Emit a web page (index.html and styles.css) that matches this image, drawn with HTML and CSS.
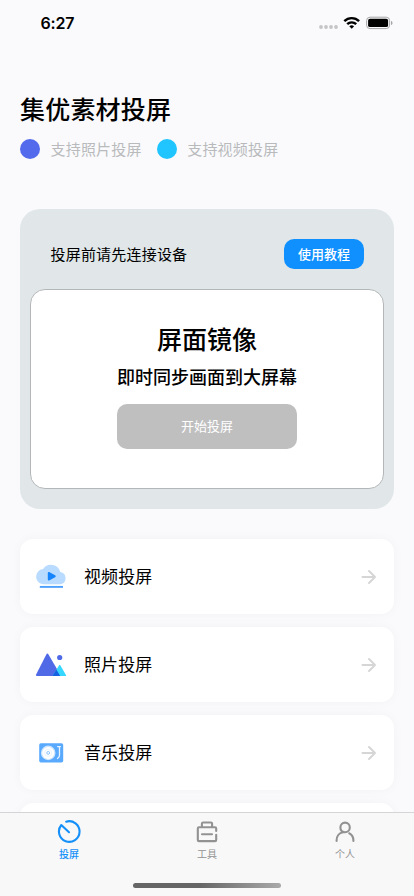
FILE: index.html
```html
<!DOCTYPE html>
<html lang="zh-CN">
<head>
<meta charset="utf-8">
<meta name="viewport" content="width=device-width, initial-scale=1">
<title>集优素材投屏</title>
<link rel="stylesheet" href="styles.css">
</head>
<body>
<div class="screen">
  <header class="status">
    <span class="time">6:27</span>
    <svg class="status-icons" width="76" height="16" viewBox="0 0 76 16">
      <g fill="#c5c5c8"><circle cx="3" cy="11" r="1.9"/><circle cx="8" cy="11" r="1.9"/><circle cx="13" cy="11" r="1.9"/><circle cx="18" cy="11" r="1.9"/></g>
      <g fill="none" stroke="#000" stroke-width="2.4"><path d="M26.300 5.200a10.500 10.500 0 0 1 14.800 0"/><path d="M29.200 8.200a6.400 6.400 0 0 1 9 0"/></g>
      <path d="M31.300 10.200a3.600 3.600 0 0 1 4.800 0l-2.400 2.500z"/>
      <rect x="48.600" y="1.200" width="23" height="11.400" rx="3.400" fill="none" stroke="#a5a5a7"/>
      <rect x="50.100" y="2.700" width="20" height="8.400" rx="1.900"/>
      <path d="M73 5v4c1-.4 1.500-1.200 1.500-2s-.5-1.600-1.500-2z" fill="#a5a5a7"/>
    </svg>
  </header>
  <main class="content">
    <h1 class="title">集优素材投屏</h1>
    <div class="legend">
      <span class="dot photo"></span><span class="legend-text">支持照片投屏</span>
      <span class="dot video"></span><span class="legend-text">支持视频投屏</span>
    </div>
    <section class="panel">
      <div class="panel-head"><span class="panel-note">投屏前请先连接设备</span><button class="guide">使用教程</button></div>
      <div class="mirror">
        <h2 class="mirror-title">屏面镜像</h2>
        <p class="mirror-text">即时同步画面到大屏幕</p>
        <button class="start">开始投屏</button>
      </div>
    </section>
    <div class="list">
      <div class="row">
        <svg class="row-icon" width="32" height="32" viewBox="0 0 32 32">
          <path d="M9.300 23.200a7.600 7.600 0 0 1-1.200-15.200A9.600 9.600 0 0 1 25.300 11a6.200 6.200 0 0 1 .3 12.200z" fill="#b9dbff"/>
          <path d="M12.800 12.200c0-1.100.9-1.500 1.800-1l5.500 3.100c.9.600.9 1.400 0 1.900l-5.500 3.100c-.9.500-1.800.1-1.800-1z" fill="#1684fc"/>
          <path d="M4.800 25.900h23.200" stroke="#4da0fc" stroke-width="1.900"/>
        </svg>
        <span class="row-name">视频投屏</span>
        <svg width="16" height="16" viewBox="0 0 16 16" class="arrow"><path d="M1.500 8h12.500M8 2l6 6-6 6"/></svg>
      </div>
      <div class="row">
        <svg class="row-icon" width="32" height="32" viewBox="0 0 32 32">
          <path d="M11.300 5.400q1.100-1.800 2.200 0l11.700 20.200q.7 1.500-.9 1.500H2q-1.600 0-.9-1.500z" fill="#5069e6"/>
          <path d="M24.100 16.200q.6-1 1.200 0l5.800 10q.4.900-.6.900h-12q-1 0-.5-.9z" fill="#35d7ff"/>
          <path d="M21.350 20.600l3.850 6.500h-6.700q-1 0-.5-.9z" fill="#1462e2"/>
          <circle cx="24.700" cy="8.500" r="2.600" fill="#5069e6"/>
        </svg>
        <span class="row-name">照片投屏</span>
        <svg width="16" height="16" viewBox="0 0 16 16" class="arrow"><path d="M1.500 8h12.500M8 2l6 6-6 6"/></svg>
      </div>
      <div class="row">
        <svg class="row-icon" width="32" height="32" viewBox="0 0 32 32">
          <rect x="4.200" y="6.200" width="24" height="19.200" rx="1.700" fill="#59a9ff"/>
          <circle cx="13.200" cy="15.900" r="7.300" fill="#cce4ff"/>
          <circle cx="13.200" cy="15.900" r="6" fill="#fff"/>
          <circle cx="13.200" cy="15.900" r="3.500" fill="none" stroke="#dfedff" stroke-width=".7"/>
          <circle cx="13.200" cy="15.900" r="1.400" fill="#fff" stroke="#70b4fb" stroke-width=".8"/>
          <path d="M22.600 9.600h2.800M24.500 9.600v9q0 1.500-2 2.900" fill="none" stroke="#e7f3ff" stroke-width="1.300" stroke-linecap="round"/>
        </svg>
        <span class="row-name">音乐投屏</span>
        <svg width="16" height="16" viewBox="0 0 16 16" class="arrow"><path d="M1.500 8h12.500M8 2l6 6-6 6"/></svg>
      </div>
      <div class="row"></div>
    </div>
  </main>
  <nav class="tabs">
    <a class="tab active">
      <svg width="24" height="24" viewBox="0 0 24 24"><path d="M9.200 1.700A10.300 10.300 0 1 1 4.300 5L12 12.200"/></svg>
      <span>投屏</span>
    </a>
    <a class="tab">
      <svg width="24" height="24" viewBox="0 0 24 24"><path d="M21.200 11V8.500q0-1.200-1.200-1.200H4q-1.200 0-1.200 1.200v11.400q0 1.200 1.200 1.200h16q1.200 0 1.200-1.200v-5.200M6.900 7.200V3.700q0-1.200 1.200-1.200h7.800q1.200 0 1.200 1.200v3.500M7 14.200h10"/></svg>
      <span>工具</span>
    </a>
    <a class="tab">
      <svg width="24" height="24" viewBox="0 0 24 24"><path d="M3.600 21v-.5c0-4.500 2.700-7.800 6.500-8.300h2c2.600 0 4.700-2.100 4.700-4.800s-2.100-4.800-4.700-4.800-4.700 2.100-4.700 4.800c0 2.300 1.500 4.200 3.600 4.700M16.200 13.300c2.600 1.300 4.200 4 4.200 7.200v.5"/></svg>
      <span>个人</span>
    </a>
  </nav>
  <div class="home"></div>
</div>
</body>
</html>
```
FILE: styles.css
```css
* { box-sizing: border-box; }
body { margin: 0; font-family: "Noto Sans CJK SC", sans-serif; color: #000; }
h1, h2, p { margin: 0; }
button { border: 0; padding: 0 0 2px; font-family: inherit; color: #fff; }
.screen { position: relative; width: 414px; height: 896px; overflow: hidden; background: #fafafc; }
.status { height: 44px; padding: 12px 20px 0 40.500px; display: flex; justify-content: space-between; }
.time { font: 600 16px/22px Inter, sans-serif; letter-spacing: -.2px; }
.status-icons { margin-top: 4px; }
.content { padding: 46px 20px 0; }
.title { font-size: 25px; line-height: 36px; font-weight: 500; letter-spacing: .2px; }
.legend { display: flex; align-items: center; height: 20px; margin-top: 13px; font-size: 15px; letter-spacing: .2px; color: #b9babc; }
.legend-text, .panel-note, .row-name { padding-bottom: 2px; }
.dot { width: 20px; height: 20px; border-radius: 50%; margin-right: 10.500px; }
.photo { background: #536aed; }
.video { background: #20c5ff; margin-left: 15px; }
.panel { height: 300px; margin-top: 50px; padding: 30px 10px 20px; border-radius: 20px; background: #e1e7e9; }
.panel-head { display: flex; align-items: center; justify-content: space-between; height: 30px; margin: 0 20px 20px 20.500px; font-size: 15px; letter-spacing: .2px; }
.guide { width: 80px; height: 30px; border-radius: 10px; background: #1090ff; font-size: 13px; font-weight: 500; }
.mirror { height: 200px; padding-top: 30px; border: 1px solid #b4b7b8; border-radius: 15px; background: #fff; display: flex; flex-direction: column; align-items: center; }
.mirror-title { font-size: 25px; line-height: 36px; font-weight: 500; }
.mirror-text { font-size: 18px; line-height: 26px; font-weight: 500; margin-top: 7px; }
.start { width: 180px; height: 45px; margin-top: 15px; border-radius: 10px; background: #bfbfbf; font-size: 13px; }
.list { display: flex; flex-direction: column; gap: 13px; margin-top: 30px; }
.row { display: flex; align-items: center; height: 75px; flex: none; padding: 0 17px 0 15px; border-radius: 13px; background: #fff; box-shadow: 0 0 12px rgba(60, 60, 80, .035); }
.row-icon { margin-right: 17px; }
.row-name { flex: 1; font-size: 17px; letter-spacing: .1px; }
.arrow { fill: none; stroke: #d6d6d6; stroke-width: 2; stroke-linecap: round; stroke-linejoin: round; }
.tabs { position: absolute; left: 0; right: 0; bottom: 0; height: 84px; display: grid; grid-template-columns: repeat(3, 1fr); padding-top: 7px; border-top: 1px solid #d5d5d7; background: #f8f8f9; }
.tab { display: flex; flex-direction: column; align-items: center; font-size: 10px; line-height: 14px; gap: 3px; color: #929292; }
.tab svg { fill: none; stroke: currentColor; stroke-width: 2.100; stroke-linecap: round; stroke-linejoin: round; }
.active { color: #1590f8; font-weight: 500; }
.home { position: absolute; left: 133px; bottom: 8.500px; width: 148px; height: 5px; border-radius: 3px; background: linear-gradient(90deg, #666 45%, #aaa); }
```
